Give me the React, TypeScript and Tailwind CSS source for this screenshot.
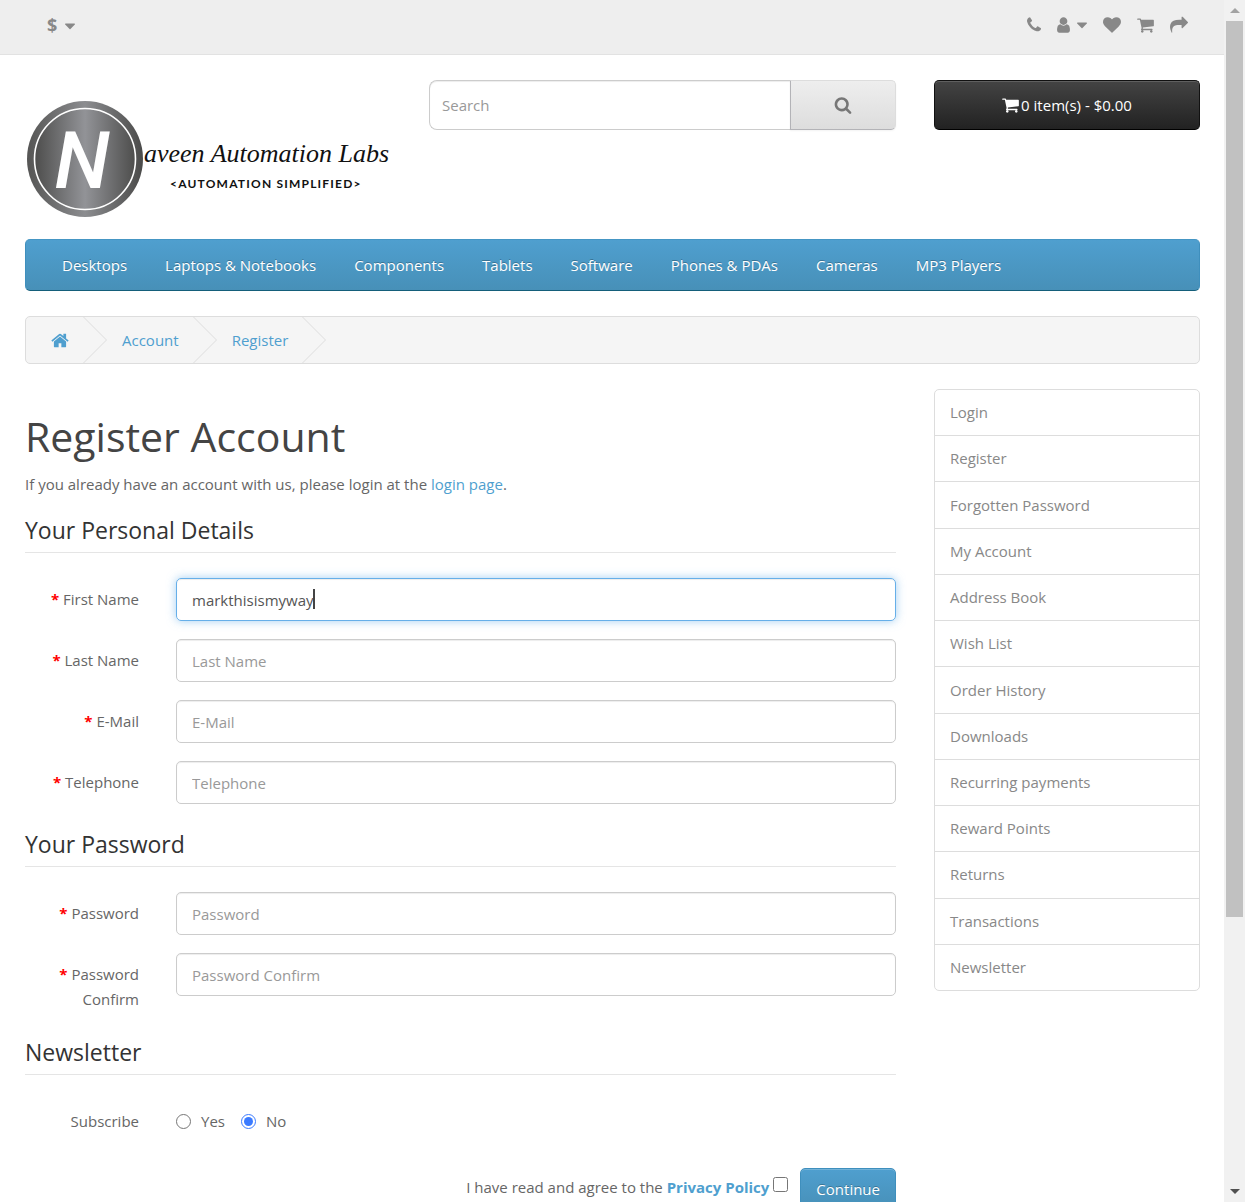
import type { ReactNode } from 'react';

type IconProps = { box: string; d: string; className?: string };

function Icon({ box, d, className = '' }: IconProps) {
  return (
    <svg viewBox={box} className={className} fill="currentColor" aria-hidden="true">
      <path d={d} />
    </svg>
  );
}

const phone =
  'M1600 1240q0 27-10 70.5t-21 68.5q-21 50-122 106-94 51-186 51-27 0-53-3.5t-57.5-12.5-47-14.5-55.5-20.5-49-18q-98-35-175-83-127-79-264-216t-216-264q-48-77-83-175-3-9-18-49t-20.5-55.5-14.5-47-12.5-57.5-3.5-53q0-92 51-186 56-101 106-122 25-11 68.5-21t70.5-10q14 0 21 3 18 6 53 76 11 19 30 54t35 63.5 31 53.5q3 4 17.5 25t21.5 35.5 7 28.5q0 20-28.5 50t-62 55-62 53-28.5 46q0 9 5 22.5t8.5 20.5 14 24 11.5 19q76 137 174 235t235 174q2 1 19 11.5t24 14 20.5 8.5 22.5 5q18 0 46-28.5t53-62 55-62 50-28.5q14 0 28.5 7t35.5 21.5 25 17.5q25 15 53.5 31t63.5 35 54 30q70 35 76 53 3 7 3 21z';
const user =
  'M1536 1399q0 109-62.5 187t-150.5 78h-854q-88 0-150.5-78t-62.5-187q0-85 8.5-160.5t31.5-152 58.5-131 94-89 134.5-34.5q131 128 313 128t313-128q76 0 134.5 34.5t94 89 58.5 131 31.5 152 8.5 160.5zm-256-887q0 159-112.5 271.5t-271.5 112.5-271.5-112.5-112.5-271.5 112.5-271.5 271.5-112.5 271.5 112.5 112.5 271.5z';
const heart =
  'M896 1664q-26 0-44-18l-624-602q-10-8-27.5-26t-55.5-65.5-68-97.5-53.5-121-23.5-138q0-220 127-344t351-124q62 0 126.5 21.5t120 58 95.5 68.5 76 68q36-36 76-68t95.5-68.5 120-58 126.5-21.5q224 0 351 124t127 344q0 221-229 450l-623 600q-18 18-44 18z';
const cart =
  'M704 1536q0 52-38 90t-90 38-90-38-38-90 38-90 90-38 90 38 38 90zm896 0q0 52-38 90t-90 38-90-38-38-90 38-90 90-38 90 38 38 90zm128-1088v512q0 24-16.5 42.5t-40.5 21.5l-1044 122q13 60 13 70 0 16-24 64h920q26 0 45 19t19 45-19 45-45 19h-1024q-26 0-45-19t-19-45q0-11 8-31.5t16-36 21.5-40 15.5-29.5l-177-823h-204q-26 0-45-19t-19-45 19-45 45-19h256q16 0 28.5 6.5t19.5 15.5 13 24.5 8 26 5.5 29.5 4.5 26h1201q26 0 45 19t19 45z';
const share =
  'M1792 640q0 26-19 45l-512 512q-19 19-45 19t-45-19-19-45v-256h-224q-98 0-175.5 6t-154 21.5-133 42.5-105.5 69.5-80 101-48.5 138.5-17.5 181q0 55 5 123 0 6 2.5 23.5t2.5 26.5q0 15-8.5 25t-23.5 10q-16 0-28-17-7-9-13-22t-13.5-30-10.5-24q-127-285-127-451 0-199 53-333 162-403 875-403h224v-256q0-26 19-45t45-19 45 19l512 512q19 19 19 45z';
const search =
  'M1216 832q0-185-131.5-316.5t-316.5-131.5-316.5 131.5-131.5 316.5 131.5 316.5 316.5 131.5 316.5-131.5 131.5-316.5zm512 832q0 52-38 90t-90 38q-54 0-90-38l-343-342q-179 124-399 124-143 0-273.5-55.5t-225-150-150-225-55.5-273.5 55.5-273.5 150-225 225-150 273.5-55.5 273.5 55.5 225 150 150 225 55.5 273.5q0 220-124 399l343 343q37 37 37 90z';
const home =
  'M1472 992v480q0 26-19 45t-45 19h-384v-384h-256v384h-384q-26 0-45-19t-19-45v-480q0-1 .5-3t.5-3l575-474 575 474q1 2 1 6zm223-69l-62 74q-8 9-21 11h-3q-13 0-21-7l-692-577-692 577q-12 8-24 7-13-2-21-11l-62-74q-8-10-7-23.5t11-21.5l719-599q32-26 76-26t76 26l244 204v-195q0-14 9-23t23-9h192q14 0 23 9t9 23v408l219 182q10 8 11 21.5t-7 23.5z';
const caret =
  'M1408 704q0 26-19 45l-448 448q-19 19-45 19t-45-19l-448-448q-19-19-19-45t19-45 45-19h896q26 0 45 19t19 45z';

function Caret() {
  return <Icon box="384 0 1024 1792" d={caret} className="h-[18px] w-[10px]" />;
}

function Logo() {
  return (
    <svg viewBox="0 0 366 120" className="w-full overflow-visible" role="img" aria-label="Naveen Automation Labs">
      <defs>
        <linearGradient id="disc">
          <stop offset="0" stopColor="#4d4d4c" />
          <stop offset="0.5" stopColor="#929397" />
          <stop offset="1" stopColor="#4d4d4c" />
        </linearGradient>
        <linearGradient id="rim">
          <stop offset="0" stopColor="#555554" />
          <stop offset="0.5" stopColor="#8c8d90" />
          <stop offset="1" stopColor="#4a4a49" />
        </linearGradient>
      </defs>
      <circle cx="60" cy="60" r="58" fill="url(#rim)" />
      <circle cx="60" cy="60" r="50.5" fill="url(#disc)" stroke="#fff" strokeWidth="1.6" />
      <text x="57" y="89" fill="#fff" textAnchor="middle" className="font-[Roboto,sans-serif] text-[80px] font-medium italic">
        N
      </text>
      <text x="119" y="63" fill="#111" className="font-['Liberation_Serif',serif] text-[26px] italic">
        aveen Automation Labs
      </text>
      <text x="145" y="89" fill="#111" className="font-[Lato,sans-serif] text-[12px] font-bold tracking-widest">
        {'<AUTOMATION SIMPLIFIED>'}
      </text>
    </svg>
  );
}

const categories = ['Desktops', 'Laptops & Notebooks', 'Components', 'Tablets', 'Software', 'Phones & PDAs', 'Cameras', 'MP3 Players'];

const accountLinks = [
  'Login', 'Register', 'Forgotten Password', 'My Account', 'Address Book', 'Wish List', 'Order History',
  'Downloads', 'Recurring payments', 'Reward Points', 'Returns', 'Transactions', 'Newsletter',
];

function Crumb({ children }: { children: ReactNode }) {
  return (
    <li className="flex items-center gap-[14px]">
      <a href="#" className="text-[#4f9fcf]">{children}</a>
      <svg viewBox="0 0 24 46" className="h-[46px] w-6" fill="none" stroke="#ddd" aria-hidden="true">
        <path d="M0.5 0L23.5 23L0.5 46" />
      </svg>
    </li>
  );
}

type FieldProps = { id: string; label: string; type?: string; value?: string };

function Field({ id, label, type = 'text', value }: FieldProps) {
  const active = value !== undefined;
  return (
    <div className="grid grid-cols-[114px_1fr] items-start gap-[37px]">
      <label htmlFor={id} className="pt-[9px] text-right">
        <span className="font-bold text-[#f00]">*</span> {label}
      </label>
      <div className="relative">
        <input
          id={id}
          type={type}
          placeholder={label}
          defaultValue={value}
          className={
            active
              ? 'block h-[43px] w-full rounded-[5px] border border-[#66afe9] px-[15px] text-[#555] caret-transparent shadow-[inset_0_1px_1px_rgba(0,0,0,0.075),0_0_10px_rgba(102,175,233,0.6)] outline-none'
              : 'block h-[43px] w-full rounded-[5px] border border-[#ccc] px-[15px] text-[#555] shadow-[inset_0_1px_1px_rgba(0,0,0,0.075)] outline-none placeholder:text-[#999]'
          }
        />
        {active && <span className="absolute top-[11px] left-[137px] h-5 w-0.5 bg-[#444]" />}
      </div>
    </div>
  );
}

function Section({ title, children }: { title: string; children: ReactNode }) {
  return (
    <fieldset className="mb-6">
      <legend className="mb-[25px] w-full border-b border-[#e5e5e5] pb-1.5 text-[23px] leading-8 text-[#333]">{title}</legend>
      <div className="flex flex-col gap-[18px]">{children}</div>
    </fieldset>
  );
}

export default function App() {
  return (
    <div className="flex h-screen overflow-hidden bg-white font-['Open_Sans',sans-serif] text-[15px] leading-[25px] text-[#666]">
      <div className="min-w-0 flex-1 overflow-hidden">
        <div className="border-b border-[#e2e2e2] bg-[#eee] text-[#888]">
          <div className="flex h-[54px] items-start justify-between pt-[13px] pr-9 pl-[47px]">
            <button className="flex items-center gap-2 text-[18px] font-bold" aria-label="Currency">
              <span>$</span>
              <Caret />
            </button>
            <div className="flex items-center gap-4 pt-[3px]">
              <a href="#" aria-label="Contact"><Icon box="192 0 1408 1792" d={phone} className="h-[18px] w-[14px]" /></a>
              <button aria-label="My Account" className="flex gap-[7px]">
                <Icon box="256 0 1280 1792" d={user} className="h-[18px] w-[13px]" />
                <Caret />
              </button>
              <a href="#" aria-label="Wish List"><Icon box="0 0 1792 1792" d={heart} className="size-[18px]" /></a>
              <a href="#" aria-label="Shopping Cart"><Icon box="64 0 1664 1792" d={cart} className="h-[18px] w-[17px]" /></a>
              <a href="#" aria-label="Checkout"><Icon box="0 0 1792 1792" d={share} className="size-[18px]" /></a>
            </div>
          </div>
        </div>

        <div className="pr-6 pl-[25px]">
          <header className="grid grid-cols-[366fr_467fr_266fr] items-start gap-[38px] pt-[25px]">
            <a href="#" className="block pt-[19px] pb-5"><Logo /></a>
            <form className="flex h-[50px]" role="search">
              <input
                type="text"
                aria-label="Search"
                placeholder="Search"
                className="min-w-0 flex-1 rounded-l-[8px] border border-r-0 border-[#ccc] px-3 shadow-[inset_0_1px_1px_rgba(0,0,0,0.075)] outline-none placeholder:text-[#999]"
              />
              <button
                type="button"
                aria-label="Search"
                className="flex w-[106px] items-center justify-center rounded-r-[5px] border border-[#ddd] border-b-[#b3b3b7] border-l-[#b3b3b7] bg-linear-to-b from-[#eee] to-[#ddd] text-[#777] shadow-xs"
              >
                <Icon box="0 0 1792 1792" d={search} className="size-[18px]" />
              </button>
            </form>
            <button className="flex h-[50px] items-center justify-center gap-0.5 rounded-[5px] border border-[#111] border-b-black bg-linear-to-b from-[#444] to-[#222] text-white shadow-[inset_0_1px_0_rgba(255,255,255,0.15)]">
              <Icon box="64 0 1664 1792" d={cart} className="h-[18px] w-[17px]" />
              <span>0 item(s) - $0.00</span>
            </button>
          </header>

          <nav className="rounded-[5px] border border-x-[#3f8fbd] border-t-[#4596c4] border-b-[#145e7a] bg-linear-to-b from-[#4f9fcf] to-[#4790b8]">
            <ul className="flex h-[50px] items-center gap-[38px] px-9 text-white">
              {categories.map((c) => (
                <li key={c}><a href="#" className="whitespace-nowrap text-shadow-[0_-1px_0_rgba(0,0,0,0.25)]">{c}</a></li>
              ))}
            </ul>
          </nav>

          <ol className="mt-[25px] flex h-12 items-center gap-[15px] rounded-[5px] border border-[#ddd] bg-[#f5f5f5] pl-[25px]">
            <Crumb><Icon box="64 0 1664 1792" d={home} className="h-[19px] w-[18px]" /></Crumb>
            <Crumb>Account</Crumb>
            <Crumb>Register</Crumb>
          </ol>

          <div className="mt-[25px] grid grid-cols-[871fr_266fr] items-start gap-[38px]">
            <main>
              <h1 className="pt-6 text-[41px] leading-[46px] text-[#444]">Register Account</h1>
              <p className="mt-[13px] mb-[17px]">
                If you already have an account with us, please login at the <a href="#" className="text-[#4f9fcf]">login page</a>.
              </p>
              <form>
                <Section title="Your Personal Details">
                  <Field id="firstname" label="First Name" value="markthisismyway" />
                  <Field id="lastname" label="Last Name" />
                  <Field id="email" label="E-Mail" type="email" />
                  <Field id="telephone" label="Telephone" type="tel" />
                </Section>
                <Section title="Your Password">
                  <Field id="password" label="Password" type="password" />
                  <Field id="confirm" label="Password Confirm" type="password" />
                </Section>
                <Section title="Newsletter">
                  <div className="grid grid-cols-[114px_1fr] gap-[37px] pt-[9px] pb-[10px]">
                    <span id="subscribe" className="text-right">Subscribe</span>
                    <div role="radiogroup" aria-labelledby="subscribe" className="flex gap-4">
                      <label className="flex items-center gap-[10px]">
                        <input type="radio" name="newsletter" className="size-[15px] accent-[#3b7bff]" />
                        Yes
                      </label>
                      <label className="flex items-center gap-[10px]">
                        <input type="radio" name="newsletter" defaultChecked className="size-[15px] accent-[#3b7bff]" />
                        No
                      </label>
                    </div>
                  </div>
                </Section>
                <div className="flex items-start justify-end">
                  <label htmlFor="agree" className="pt-[7px]">
                    I have read and agree to the <a href="#" className="font-bold text-[#4f9fcf]">Privacy Policy</a>
                  </label>
                  <input id="agree" type="checkbox" className="mt-[9px] mr-3 ml-1 size-[15px]" />
                  <button
                    type="button"
                    className="h-[42px] rounded-[5px] border border-[#3f8fbd] bg-linear-to-b from-[#4f9fcf] to-[#4790b8] px-[15px] text-white shadow-[inset_0_1px_0_rgba(255,255,255,0.2)] text-shadow-[0_-1px_0_rgba(0,0,0,0.25)]"
                  >
                    Continue
                  </button>
                </div>
              </form>
            </main>

            <aside>
              <ul className="flex min-h-[602px] flex-col divide-y divide-[#ddd] rounded-[5px] border border-[#ddd] text-[#888]">
                {accountLinks.map((l) => (
                  <li key={l} className="flex flex-1 items-center px-[15px]"><a href="#">{l}</a></li>
                ))}
              </ul>
            </aside>
          </div>
        </div>
      </div>

      <div className="flex w-[21px] flex-col items-center bg-[#f1f1f1]" aria-hidden="true">
        <div className="flex h-[21px] items-center">
          <svg viewBox="0 0 10 5" className="w-[10px]" fill="#a3a3a3"><path d="M5 0L10 5H0z" /></svg>
        </div>
        <div className="w-full flex-1 px-0.5">
          <div className="h-17/22 bg-[#c1c1c1]" />
        </div>
        <div className="flex h-[21px] items-center">
          <svg viewBox="0 0 10 5" className="w-[10px]" fill="#505050"><path d="M0 0H10L5 5z" /></svg>
        </div>
      </div>
    </div>
  );
}
